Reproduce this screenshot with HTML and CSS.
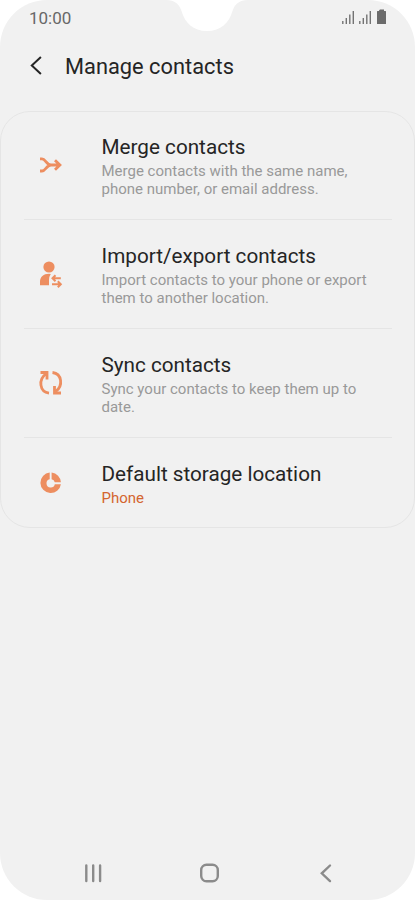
FILE: index.html
```html
<!DOCTYPE html>
<html lang="en">
<head>
<meta charset="utf-8">
<meta name="viewport" content="width=device-width, initial-scale=1">
<title>Manage contacts</title>
<link rel="stylesheet" href="styles.css">
</head>
<body>
<div class="phone">
  <svg class="notch" width="82" height="32" viewBox="0 0 82 32" aria-hidden="true"><path d="M0 0C9 0 13 4 15.500 11C19 23 27 31 41 31S63 23 66.500 11C69 4 73 0 82 0Z"/></svg>
  <div class="status">
    <span class="time">10:00</span>
    <svg class="indicators" width="46" height="17" viewBox="0 0 46 17" aria-hidden="true">
      <path d="M1.800 13v3M5.300 10v6M8.800 6.500V16M12.300 3V16M18.800 13v3M22.300 10v6M25.800 6.500V16M29.300 3V16" fill="none" stroke="#737373" stroke-width="1.400"/>
      <path d="M36.500 3h1.500V2.500l1-1h4V3h1.500q.5 0 .5.500v12q0 .5-.5.500h-8q-.5 0-.5-.500v-12q0-.5.500-.5Z" fill="#6b6b6b"/>
    </svg>
  </div>
  <header class="header">
    <svg class="back" width="14" height="20" viewBox="0 0 14 20" aria-hidden="true"><path d="M11.900 2 2.800 10.500l9.100 8.500"/></svg>
    <h1>Manage contacts</h1>
  </header>
  <main class="card">
    <section class="row">
      <svg class="icon" width="28" height="28" viewBox="0 0 28 28" aria-hidden="true"><path class="line" d="M3 7.900h2c3.500 0 4.500 6.100 9 6.100h9M3 20h2c3.500 0 4.500-6 9-6M18 9.300l4.900 4.700-4.900 4.700"/></svg>
      <div><h2>Merge contacts</h2><p>Merge contacts with the same name,<br>phone number, or email address.</p></div>
    </section>
    <section class="row">
      <svg class="icon" width="28" height="28" viewBox="0 0 28 28" aria-hidden="true"><circle cx="12" cy="7" r="5.600"/><path d="M3 25.300v-3.600c0-5 3.500-8 9-8q1.500 0 1.800.3-1.800 2.500-1.800 6v5.300Z"/><path class="thin" d="M23.800 18.200h-8M18.500 15.200l-3 3 3 3M15 24.200h8M20.800 21.200l3 3-3 3"/></svg>
      <div><h2>Import/export contacts</h2><p>Import contacts to your phone or export<br>them to another location.</p></div>
    </section>
    <section class="row">
      <svg class="icon" width="28" height="28" viewBox="0 0 28 28" aria-hidden="true"><path class="line" d="M12 24.100C2.500 23 1 10.500 9 4.800M15.500 3.500c9.500 1.200 11 13.500 3 19.200"/><path class="line square" d="M3.500 3.500h6.500v7M24 24h-6.500v-7"/></svg>
      <div><h2>Sync contacts</h2><p>Sync your contacts to keep them up to<br>date.</p></div>
    </section>
    <section class="row last">
      <svg class="icon" width="28" height="28" viewBox="0 0 28 28" aria-hidden="true"><path d="M12.700 3.500v6.700a4.200 4.200 0 1 0 5.100 5H23.900A10.300 10.300 0 1 1 12.700 3.500Z"/><path d="M14.600 3.500A10.400 10.400 0 0 1 23.900 13.300H17.800a4.200 4.200 0 0 0-3.200-3.100Z"/></svg>
      <div><h2>Default storage location</h2><p class="value">Phone</p></div>
    </section>
  </main>
  <nav class="nav" aria-label="System navigation">
    <svg width="20" height="20" viewBox="0 0 20 20"><path d="M3.300 2.500v15.500M10.200 2.500v15.500M17.100 2.500v15.500"/></svg>
    <svg width="20" height="20" viewBox="0 0 20 20"><rect x="1.200" y="1.700" width="16.600" height="16.600" rx="5.300"/></svg>
    <svg width="20" height="20" viewBox="0 0 20 20"><path d="M14 2.500 5.800 10.300 14 18.100"/></svg>
  </nav>
</div>
</body>
</html>
```
FILE: styles.css
```css
* { box-sizing: border-box; }
body { margin: 0; background: #fff; font-family: Roboto, "Liberation Sans", sans-serif; }
.phone { position: relative; width: 415px; height: 900px; border-radius: 47px; overflow: hidden; background: #f1f1f1; display: flex; flex-direction: column; }
.notch { position: absolute; left: 166px; top: 0; fill: #fff; }
.status { height: 36px; display: flex; justify-content: space-between; padding: 8px 28px 0 29px; }
.time { font-size: 17px; line-height: 20px; color: #686868; }
.header { height: 75px; display: flex; align-items: flex-start; padding: 17px 0 0 29px; }
.back { margin: 2px 22px 0 0; fill: none; stroke: #252525; stroke-width: 2; }
h1, h2 { margin: 0; line-height: 27px; font-weight: 400; color: #252525; white-space: nowrap; }
h1 { font-size: 21.800px; letter-spacing: .02px; }
h2 { font-size: 20.700px; }
.card { height: 417px; border: 1px solid #e5e5e5; border-radius: 30px; }
.row { height: 109px; display: flex; align-items: flex-start; margin: 0 22px 0 23px; padding: 23px 0 0 12px; border-bottom: 1px solid #e5e5e5; }
.row:first-child { height: 108px; padding-top: 22px; }
.row.last { height: 89px; border: 0; }
.icon { flex: none; margin: 17px 36.500px 0 1px; fill: #ed8e60; }
.row.last .icon { margin-top: 8px; }
.line, .thin { fill: none; stroke: #ed8e60; stroke-width: 2.800; }
.thin { stroke-width: 2; }
p { margin: 1px 0 0; font-size: 15px; line-height: 18px; color: #999; white-space: nowrap; }
.value { color: #d4652f; }
.nav { margin-top: auto; height: 37px; padding: 0 79px 0 83px; display: flex; justify-content: space-between; }
.nav svg { fill: none; stroke: #8b8b8b; stroke-width: 2.400; stroke-linecap: round; }
```
